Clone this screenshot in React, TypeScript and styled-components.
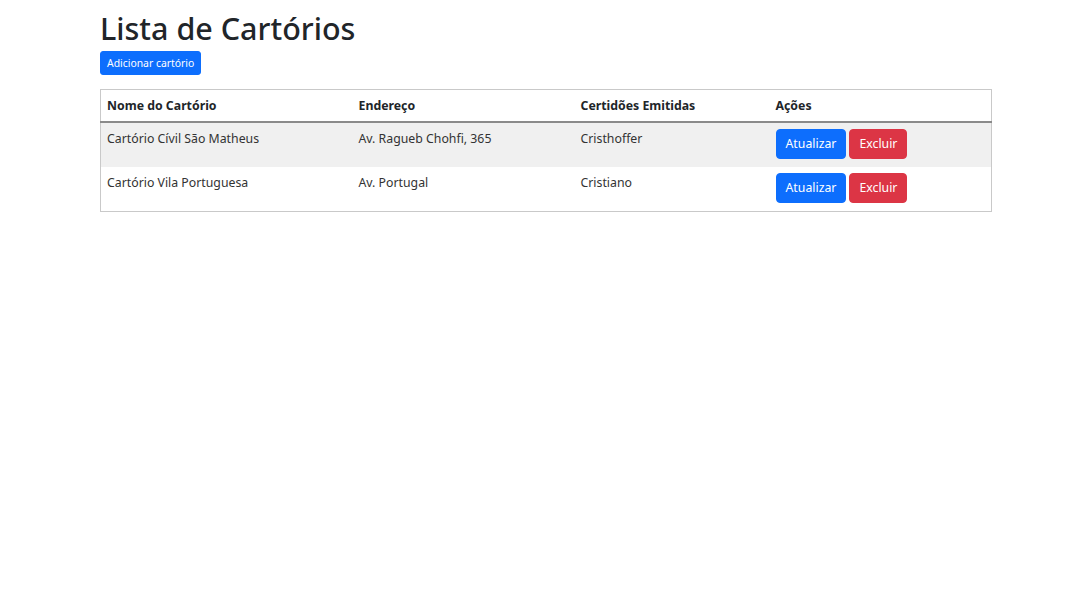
import React from "react";
import styled, { createGlobalStyle } from "styled-components";

const GlobalStyle = createGlobalStyle`
  body {
    margin: 0;
    background: #fff;
    font-family: "Noto Sans", "Open Sans", sans-serif;
    color: #212529;
  }
`;

const Page = styled.div`
  width: 892px;
  margin: 0 0 0 100px;
  padding-top: 8px;
`;

const Title = styled.h1`
  font-size: 30.5px;
  font-weight: 500;
  line-height: 40px;
  margin: 0 0 2px;
`;

const Button = styled.button<{ $variant?: "primary" | "danger"; $small?: boolean }>`
  display: inline-block;
  font-family: inherit;
  font-size: ${({ $small }) => ($small ? "10.4px" : "12.3px")};
  line-height: ${({ $small }) => ($small ? "16px" : "20px")};
  padding: ${({ $small }) => ($small ? "3px 6px" : "4px 9px")};
  color: #fff;
  background: ${({ $variant }) => ($variant === "danger" ? "#dc3545" : "#0d6efd")};
  border: 1px solid ${({ $variant }) => ($variant === "danger" ? "#dc3545" : "#0d6efd")};
  border-radius: ${({ $small }) => ($small ? "3px" : "4px")};
  cursor: pointer;
`;

const Actions = styled.div`
  display: flex;
  gap: 3px;
`;

const Table = styled.table`
  width: 892px;
  margin-top: 14px;
  table-layout: fixed;
  border-collapse: collapse;
  border: 1px solid #c9c9c9;
  font-size: 12.3px;
  line-height: 20px;
`;

const Th = styled.th<{ $w?: number }>`
  box-sizing: border-box;
  width: ${({ $w }) => ($w ? `${$w}px` : "auto")};
  text-align: left;
  font-weight: 700;
  padding: 6px 6px 5px;
  border-bottom: 2px solid #8a8a8a;
`;

const Row = styled.tr<{ $striped?: boolean }>`
  background: ${({ $striped }) => ($striped ? "#f0f0f0" : "#fff")};
`;

const Td = styled.td`
  vertical-align: top;
  padding: 6px 6px 8px;
  color: #333;
`;

const cartorios = [
  { nome: "Cartório Cívil São Matheus", endereco: "Av. Ragueb Chohfi, 365", certidoes: "Cristhoffer" },
  { nome: "Cartório Vila Portuguesa", endereco: "Av. Portugal", certidoes: "Cristiano" },
];

export default function App() {
  return (
    <Page>
      <GlobalStyle />
      <Title>Lista de Cartórios</Title>
      <Button $small>Adicionar cartório</Button>
      <Table>
        <thead>
          <tr>
            <Th $w={252}>Nome do Cartório</Th>
            <Th $w={222}>Endereço</Th>
            <Th $w={195}>Certidões Emitidas</Th>
            <Th>Ações</Th>
          </tr>
        </thead>
        <tbody>
          {cartorios.map((c, i) => (
            <Row key={i} $striped={i % 2 === 0}>
              <Td>{c.nome}</Td>
              <Td>{c.endereco}</Td>
              <Td>{c.certidoes}</Td>
              <Td>
                <Actions>
                  <Button>Atualizar</Button>
                  <Button $variant="danger">Excluir</Button>
                </Actions>
              </Td>
            </Row>
          ))}
        </tbody>
      </Table>
    </Page>
  );
}
